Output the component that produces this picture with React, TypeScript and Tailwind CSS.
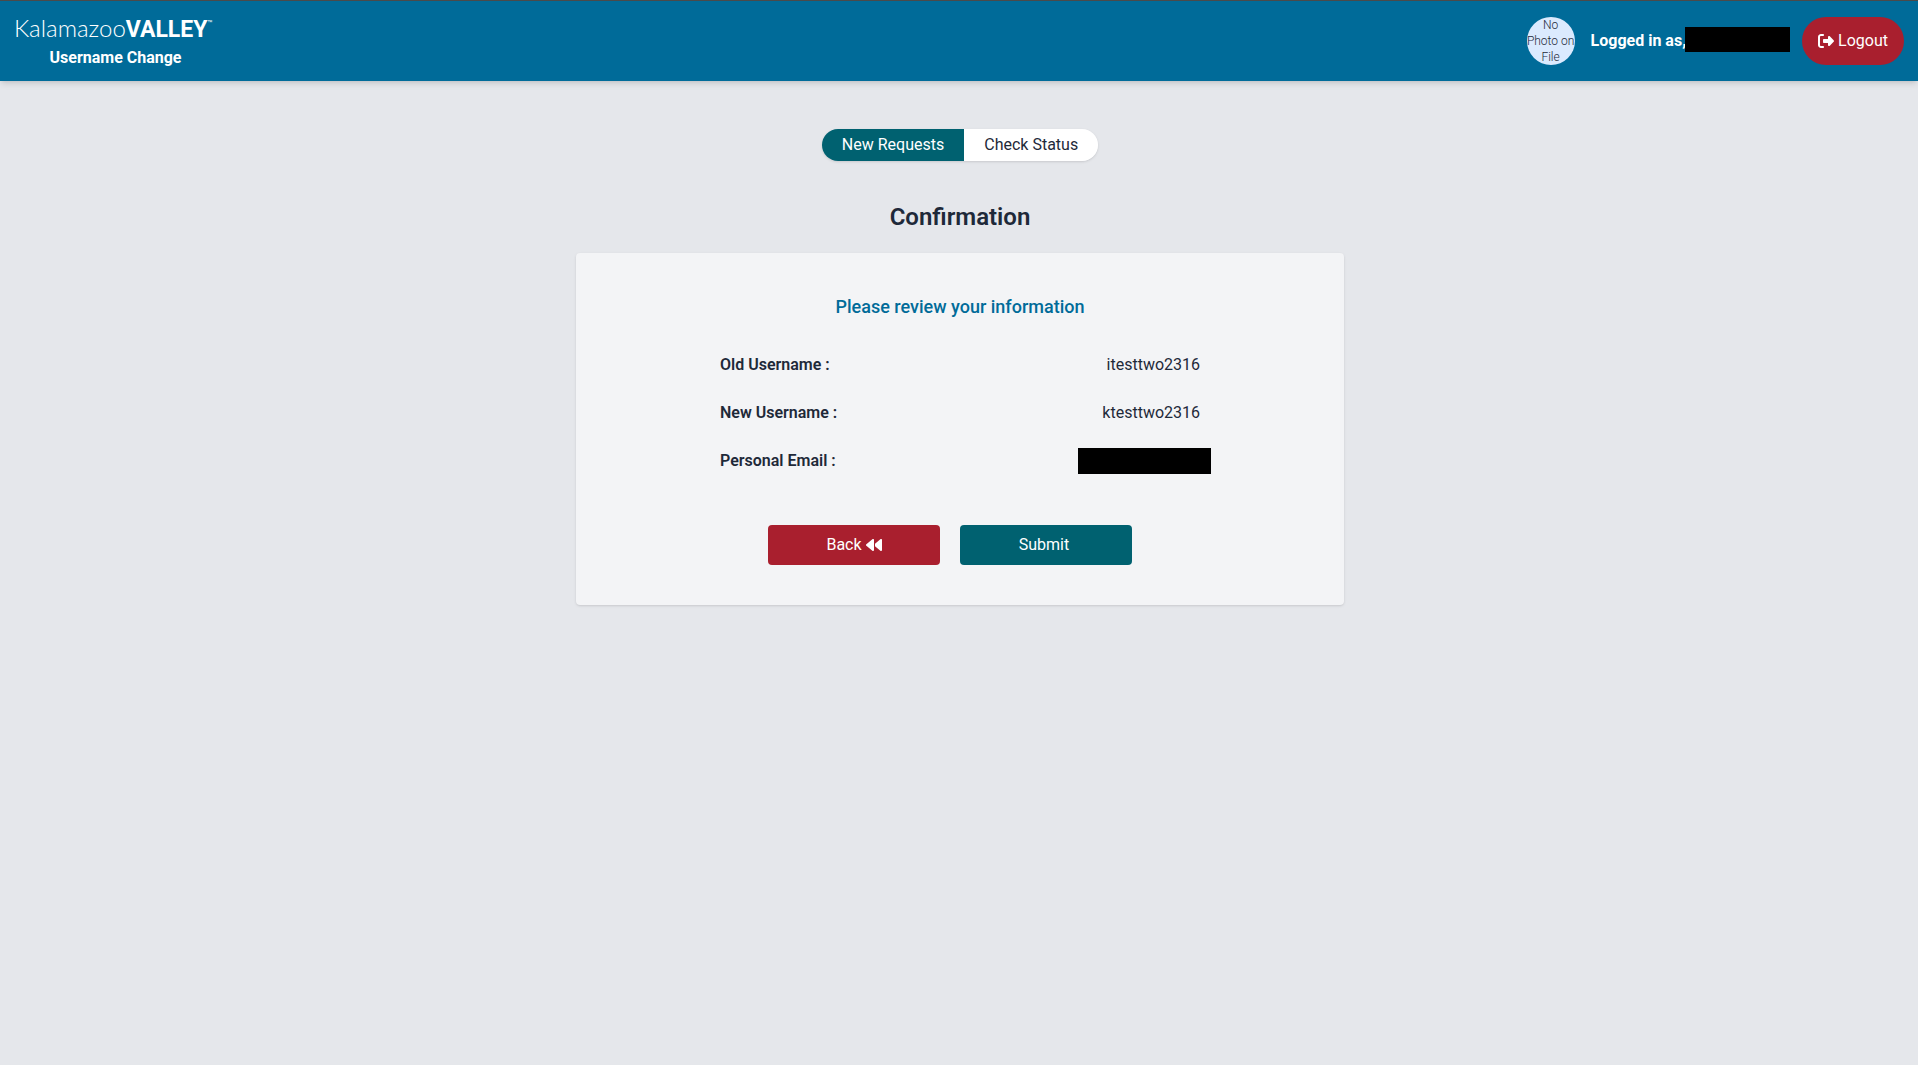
import { FaBackward, FaRightFromBracket } from "react-icons/fa6";

interface ReviewItem {
  label: string;
  value?: string;
}

const reviewItems: ReviewItem[] = [
  { label: "Old Username :", value: "itesttwo2316" },
  { label: "New Username :", value: "ktesttwo2316" },
  { label: "Personal Email :" },
];

function Header() {
  return (
    <header className="flex items-center justify-between border-t border-[#4a4a4a] bg-[#006b99] px-3.5 text-white shadow-md">
      <div className="flex h-20 w-[203px] flex-col items-center justify-center">
        <a
          href="#"
          className="flex items-baseline self-start leading-8 whitespace-nowrap"
        >
          <span className="font-[Lato,sans-serif] text-2xl leading-8 font-light">
            Kalamazoo
          </span>
          <span className="text-[23px] font-bold">VALLEY</span>
          <span className="self-start text-[8px] leading-6">™</span>
        </a>
        <p className="leading-6 font-bold">Username Change</p>
      </div>

      <div className="flex items-center">
        <div className="flex size-12 items-center justify-center overflow-hidden rounded-full bg-blue-100 text-center text-xs font-light whitespace-nowrap text-gray-800">
          <span>
            No
            <br />
            Photo on
            <br />
            File
          </span>
        </div>
        <p className="ml-4 font-bold">Logged in as,</p>
        <span className="mb-1 -ml-px h-[25px] w-[105px] bg-black" />
        <button
          type="button"
          className="ml-3 flex h-12 items-center gap-1 rounded-full bg-[#a91f2e] px-4"
        >
          <FaRightFromBracket aria-hidden="true" />
          Logout
        </button>
      </div>
    </header>
  );
}

function RequestTabs() {
  return (
    <nav className="flex overflow-hidden rounded-full shadow-sm">
      <button type="button" className="bg-[#006170] px-5 py-1 text-white">
        New Requests
      </button>
      <button type="button" className="bg-white px-5 py-1">
        Check Status
      </button>
    </nav>
  );
}

function ReviewCard() {
  return (
    <section className="mt-5 w-full max-w-3xl rounded bg-gray-100 py-10 shadow-sm">
      <h2 className="text-center text-lg leading-7 font-medium text-[#006b99]">
        Please review your information
      </h2>

      <dl className="mt-5 px-36">
        {reviewItems.map(item => (
          <div key={item.label} className="flex h-12 items-center justify-between">
            <dt className="font-semibold">{item.label}</dt>
            {item.value ? (
              <dd>{item.value}</dd>
            ) : (
              <dd className="-mr-[11px] h-[26px] w-[133px] bg-black" />
            )}
          </div>
        ))}
      </dl>

      <div className="mt-10 flex gap-5 pl-48 text-white">
        <button
          type="button"
          className="flex h-10 w-[172px] items-center justify-center gap-1 rounded bg-[#a91f2e]"
        >
          Back
          <FaBackward aria-hidden="true" />
        </button>
        <button type="button" className="h-10 w-[172px] rounded bg-[#006170] pr-1">
          Submit
        </button>
      </div>
    </section>
  );
}

export default function App() {
  return (
    <div className="min-h-screen bg-gray-200 font-[Roboto,sans-serif] text-gray-800">
      <Header />
      <main className="flex flex-col items-center pt-12 pl-0.5">
        <RequestTabs />
        <h1 className="mt-10 text-2xl leading-8 font-semibold">Confirmation</h1>
        <ReviewCard />
      </main>
    </div>
  );
}
